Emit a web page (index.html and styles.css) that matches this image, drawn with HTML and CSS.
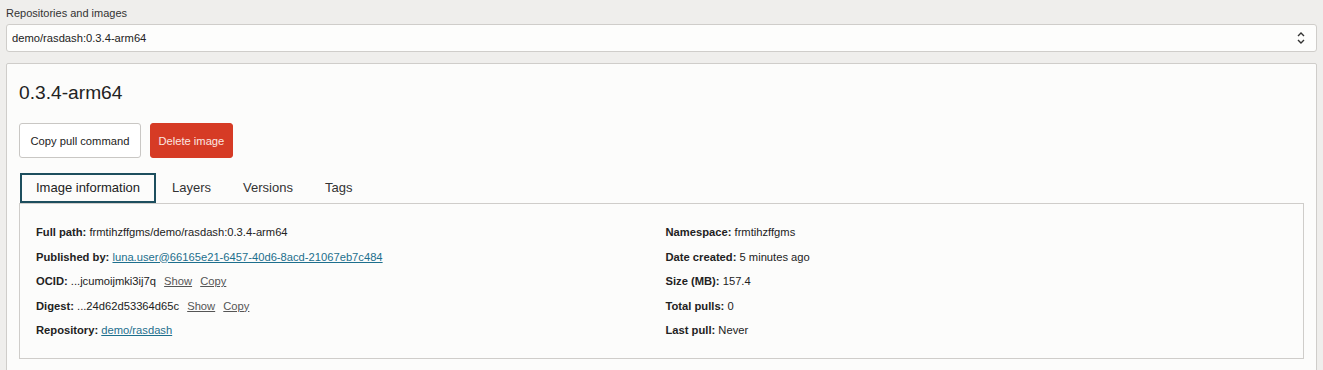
FILE: index.html
```html
<!DOCTYPE html>
<html lang="en">
<head>
    <meta charset="UTF-8">
    <meta name="viewport" content="width=device-width, initial-scale=1.0">
    <title>Repositories and images</title>
    <link rel="stylesheet" href="styles.css">
</head>
<body>
    <div class="picker">
        <label class="picker-label" for="repoSelect">Repositories and images</label>
        <div class="select-box" id="repoSelect">
            <span>demo/rasdash:0.3.4-arm64</span>
            <svg class="select-arrows" width="10" height="14" viewBox="0 0 10 14">
                <path d="M2 5 L5 2 L8 5" fill="none" stroke="#333" stroke-width="1.4"/>
                <path d="M2 9 L5 12 L8 9" fill="none" stroke="#333" stroke-width="1.4"/>
            </svg>
        </div>
    </div>

    <div class="image-panel">
        <h1>0.3.4-arm64</h1>

        <div class="actions">
            <button class="btn btn-default">Copy pull command</button>
            <button class="btn btn-danger">Delete image</button>
        </div>

        <div class="tabs">
            <span class="tab active">Image information</span>
            <span class="tab">Layers</span>
            <span class="tab">Versions</span>
            <span class="tab">Tags</span>
        </div>

        <div class="tab-content">
            <div class="info-col">
                <p><b>Full path:</b> frmtihzffgms/demo/rasdash:0.3.4-arm64</p>
                <p><b>Published by:</b> <a href="#">luna.user@66165e21-6457-40d6-8acd-21067eb7c484</a></p>
                <p><b>OCID:</b> ...jcumoijmki3ij7q <a class="mini-link" href="#">Show</a> <a class="mini-link" href="#">Copy</a></p>
                <p><b>Digest:</b> ...24d62d53364d65c <a class="mini-link" href="#">Show</a> <a class="mini-link" href="#">Copy</a></p>
                <p><b>Repository:</b> <a href="#">demo/rasdash</a></p>
            </div>
            <div class="info-col">
                <p><b>Namespace:</b> frmtihzffgms</p>
                <p><b>Date created:</b> 5 minutes ago</p>
                <p><b>Size (MB):</b> 157.4</p>
                <p><b>Total pulls:</b> 0</p>
                <p><b>Last pull:</b> Never</p>
            </div>
        </div>
    </div>
</body>
</html>
```

FILE: styles.css
```css
/* Page */
body {
    font-family: "Liberation Sans", Arial, sans-serif;
    font-size: 11.2px;
    color: #222;
    background-color: #efeeec;
    margin: 0;
    padding: 0 6px;
}

/* Repository picker */
.picker {
    padding-top: 6px;
}

.picker-label {
    display: block;
    font-size: 11px;
    line-height: 14px;
    color: #333;
    margin-bottom: 4px;
}

.select-box {
    display: flex;
    justify-content: space-between;
    align-items: center;
    height: 26px;
    padding: 0 10px 0 5px;
    background-color: #fdfdfc;
    border: 1px solid #cfcdca;
    border-radius: 3px;
    color: #222;
}

/* Main panel */
.image-panel {
    margin-top: 11px;
    background-color: #fcfcfb;
    border: 1px solid #cfcdca;
    border-radius: 2px;
    padding: 12px 12px 20px;
}

h1 {
    font-size: 19.2px;
    font-weight: normal;
    line-height: 24px;
    color: #222;
    margin: 5px 0 18px;
}

/* Buttons */
.actions {
    display: flex;
    gap: 9px;
}

.btn {
    font-family: inherit;
    font-size: 11.2px;
    height: 35px;
    border-radius: 3px;
    cursor: pointer;
}

.btn-default {
    padding: 0 10.5px;
    background-color: #fff;
    border: 1px solid #c9c7c4;
    color: #222;
}

.btn-danger {
    padding: 0 7.5px;
    background-color: #d63b25;
    border: 1px solid #d63b25;
    color: #fbe6e2;
}

/* Tabs */
.tabs {
    display: flex;
    margin-top: 15px;
    padding-left: 1px;
}

.tab {
    font-size: 13px;
    line-height: 26px;
    padding: 2px 16px;
    color: #333;
}

.tab.active {
    border: 2px solid #1d4e5e;
    padding: 0 14px;
    color: #222;
}

.tab-content {
    display: grid;
    grid-template-columns: 1fr 1fr;
    column-gap: 8px;
    border: 1px solid #cfcdca;
    padding: 21px 16px 10px;
}

.info-col p {
    margin: 0 0 9.5px;
    line-height: 15px;
}

.info-col b {
    color: #222;
}

a {
    color: #1d6f8d;
}

.mini-link {
    color: #555;
    margin-left: 5px;
}
```
